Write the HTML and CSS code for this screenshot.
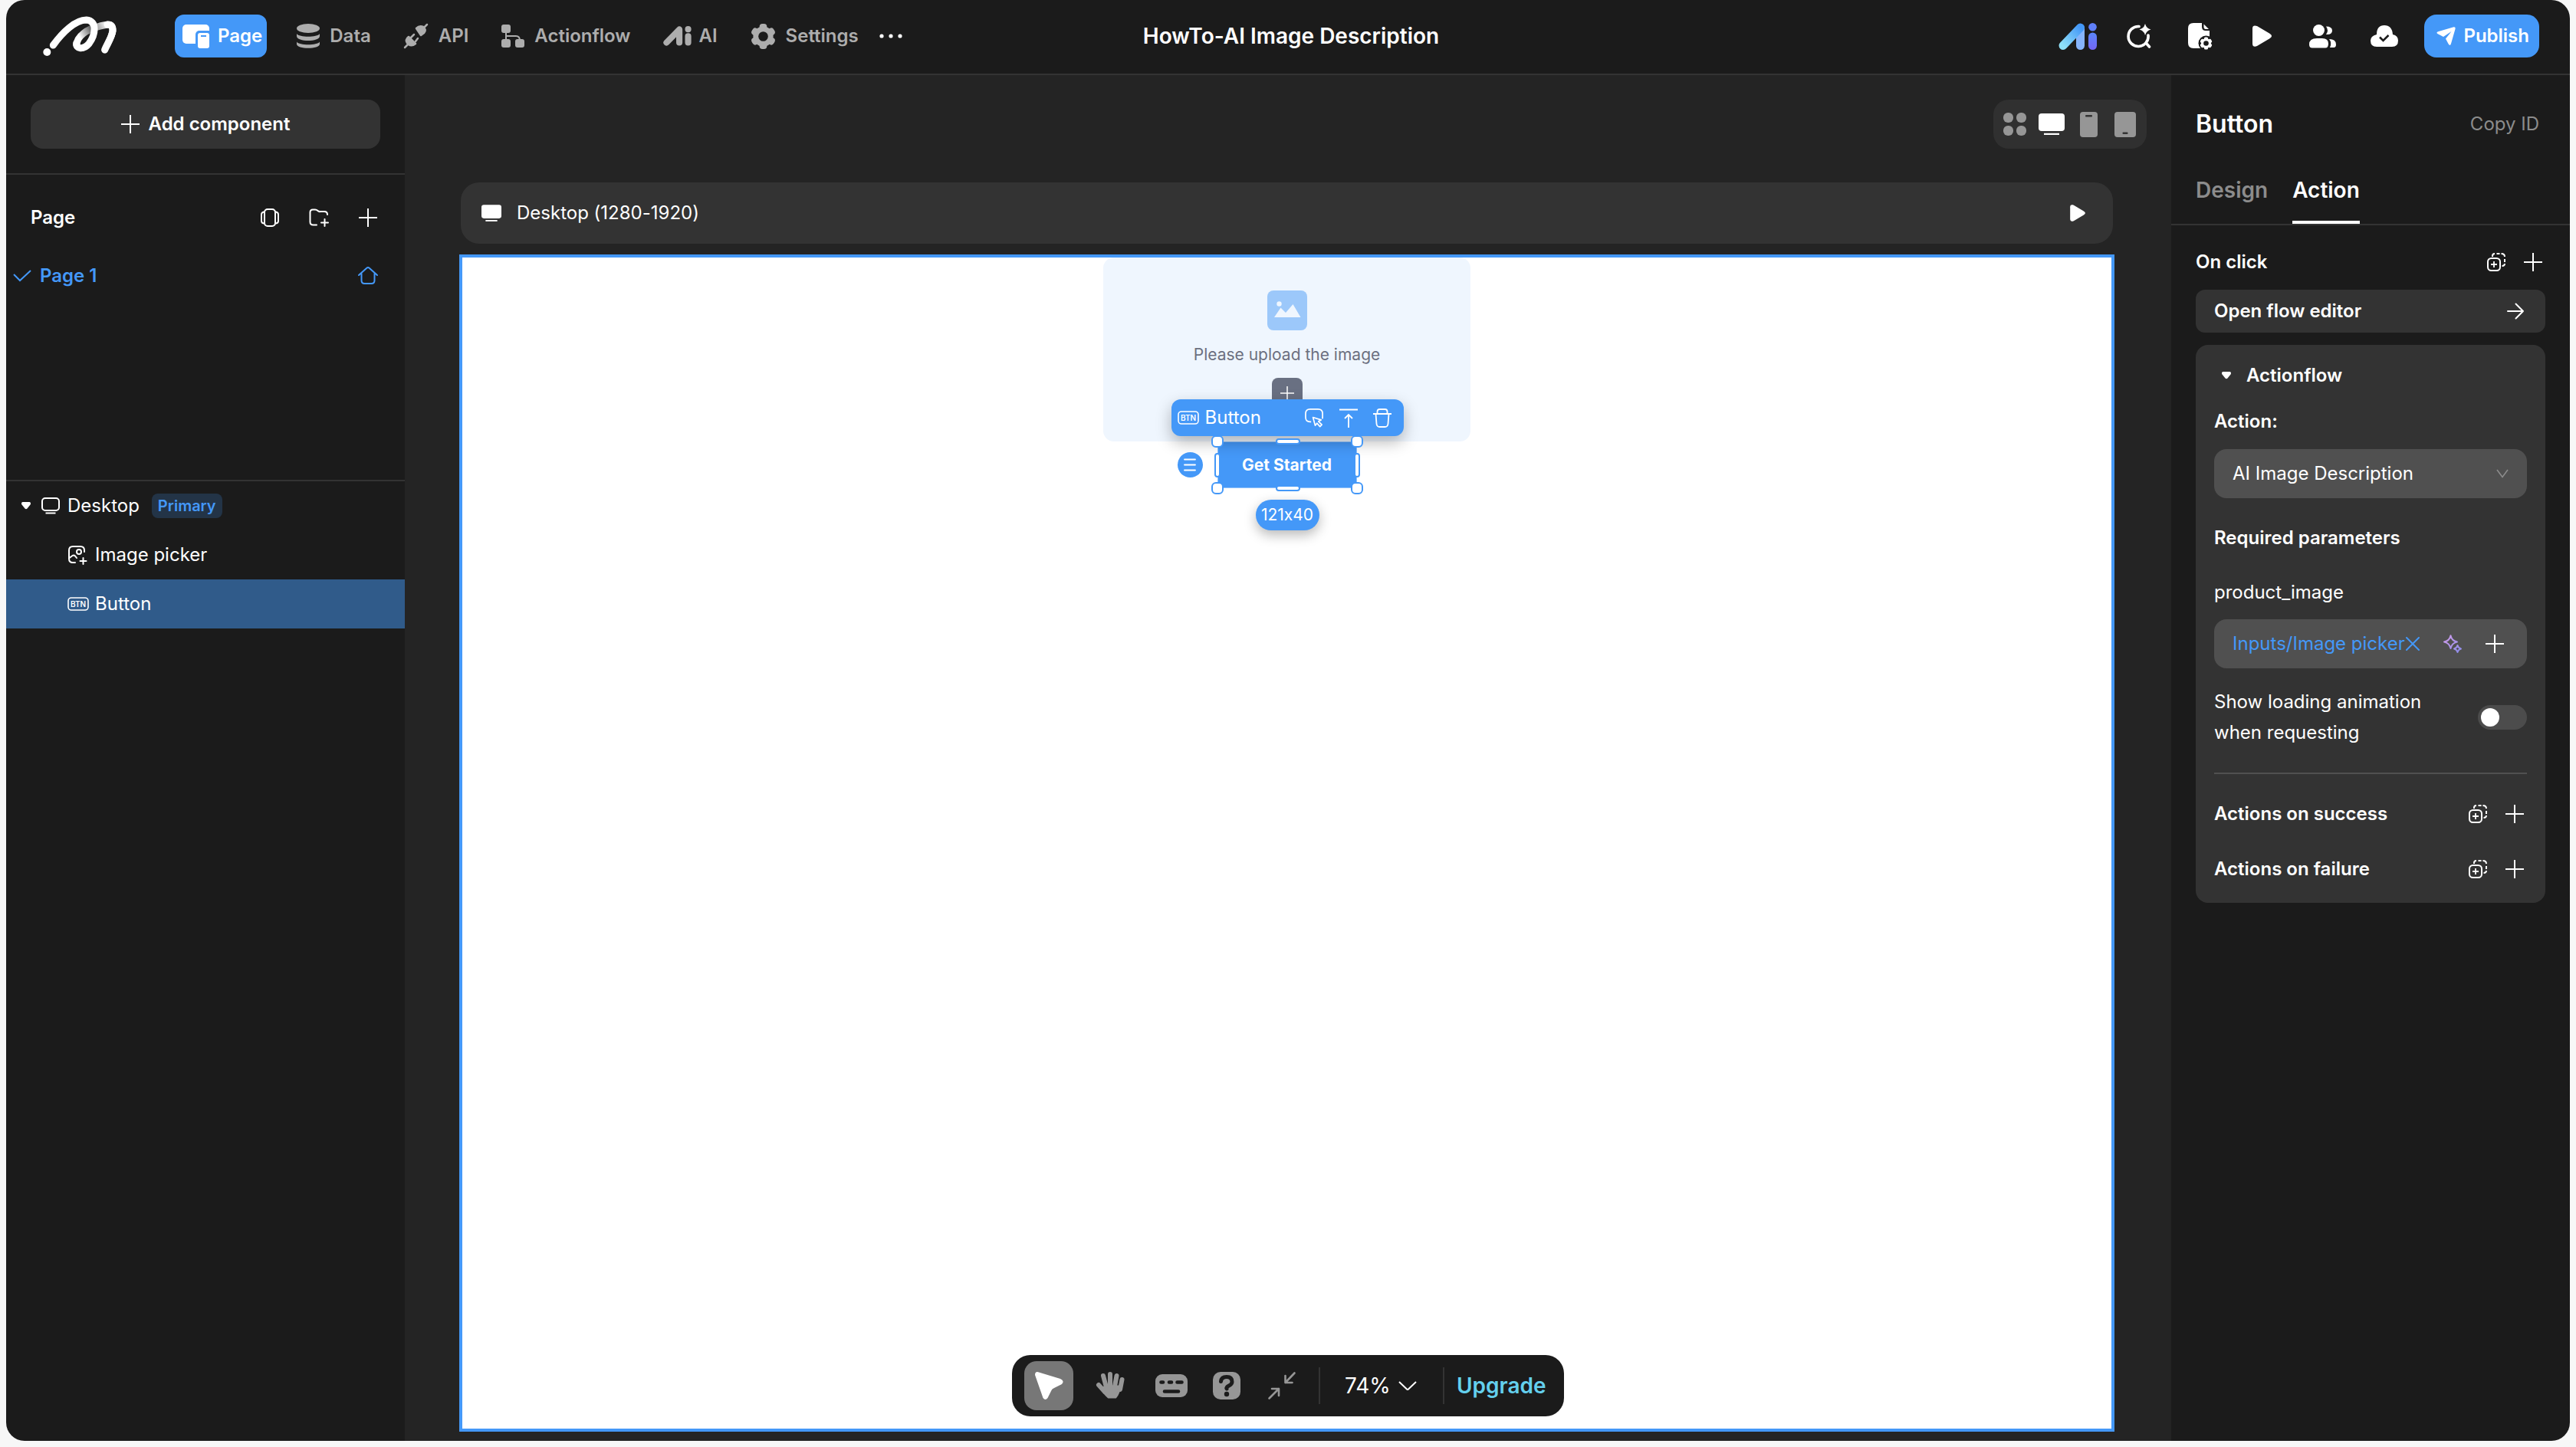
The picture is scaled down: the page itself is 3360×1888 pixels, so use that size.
FILE: index.html
```html
<!DOCTYPE html>
<html lang="en">
<head>
<meta charset="utf-8">
<title>HowTo-AI Image Description</title>
<link rel="stylesheet" href="styles.css">
</head>
<body>
<svg class="sprite" aria-hidden="true">
  <defs>
    <linearGradient id="logo-fold" gradientUnits="userSpaceOnUse" x1="185" y1="130" x2="302" y2="66">
      <stop offset="0.1" stop-color="#fff"/><stop offset="0.5" stop-color="#6a6a6a"/><stop offset="0.7" stop-color="#aaa"/><stop offset="1" stop-color="#fff"/>
    </linearGradient>
    <linearGradient id="ai-slant" x1="0" y1="1" x2="1" y2="0"><stop offset="0" stop-color="#8fe0f8"/><stop offset="1" stop-color="#4498f8"/></linearGradient>
    <linearGradient id="ai-i" x1="0" y1="0" x2="0" y2="1"><stop offset="0" stop-color="#5b86fa"/><stop offset="1" stop-color="#7465f3"/></linearGradient>
    <linearGradient id="sparkle" x1="0" y1="0" x2="1" y2="1"><stop offset="0" stop-color="#cf9be8"/><stop offset="1" stop-color="#8b8ce8"/></linearGradient>
  </defs>
  <symbol id="plus" viewBox="0 0 24 24"><path d="M12 0v24M0 12h24" stroke="currentColor" stroke-width="2"/></symbol>
  <symbol id="play" viewBox="0 0 25 28"><path d="M0 4C0 0 3 0 6 1L22 10.500C26 13 26 15 22 17.500L6 27C3 28.500 0 28 0 24Z" fill="currentColor"/></symbol>
  <symbol id="copy-plus" viewBox="0 0 24 24"><g fill="none" stroke="currentColor" stroke-width="2"><rect x="1" y="7" width="16" height="16" rx="4.500"/><path d="M9 11v8M5 15h8" stroke-width="1.800"/><path d="M7 5V4Q7 1 10 1M12.500 1h4M18.500 1Q23 1 23 5M23 8v4M23 14Q23 17 19.500 17"/></g></symbol>
  <symbol id="btn" viewBox="0 0 28 18"><rect x="1" y="1" width="26" height="16" rx="4" fill="none" stroke="currentColor" stroke-width="1.600"/><text x="14" y="12.700" class="btn-glyph" text-anchor="middle">BTN</text></symbol>
  <symbol id="caret" viewBox="0 0 12 10"><path d="M1.500 0h9Q13 1 11.500 3.500L7.500 8.500Q6 10 4.500 8.500L.5 3.500Q-1 1 1.500 0Z" fill="currentColor"/></symbol>
  <symbol id="chevron" viewBox="0 0 24 12"><path d="M1 1l11 10.500L23 1" fill="none" stroke="currentColor" stroke-width="2"/></symbol>
  <symbol id="screen" viewBox="0 0 34 28"><rect x="0" y="0" width="34" height="23" rx="4" fill="currentColor"/><path d="M7 27h20" stroke="currentColor" stroke-width="2.500"/></symbol>
</svg>

<div class="app">
  <header class="topbar">
    <nav class="topnav" aria-label="Workspace">
      <a class="logo" href="#" aria-label="Home">
        <svg width="96" height="53" viewBox="48 32 288 159" fill="none" stroke-linecap="round" stroke-linejoin="round">
          <circle cx="64" cy="173" r="15" fill="#fff"/>
          <path d="M180 145C180 110 225 82 262 74C302 62 322 60 321 90C318 115 300 140 290 164" stroke="url(#logo-fold)" stroke-width="27"/>
          <path d="M300 65C316 64 322 72 321 90C318 115 300 140 290 164" stroke="#fff" stroke-width="27"/>
          <path d="M88 146C125 95 175 47 218 47C262 50 254 105 228 140C206 166 176 160 179 138" stroke="#fff" stroke-width="27"/>
        </svg>
      </a>
      <a class="nav-item active" href="#">
        <svg width="36" height="31" viewBox="0 0 36 31"><rect width="35" height="25" rx="5" fill="#fff"/><rect x="17" y="8" width="22" height="26" rx="5" fill="#4498f8"/><rect x="20" y="11" width="15" height="20" rx="3" fill="#fff"/><rect x="24" y="14" width="7" height="2" fill="#4498f8"/></svg>
        Page</a>
      <a class="nav-item" href="#">
        <svg width="30" height="32" viewBox="0 0 30 32" fill="currentColor"><ellipse cx="15" cy="6" rx="15" ry="6"/><path d="M0 13c3 5 27 5 30 0v3c0 8-30 8-30 0zM0 23.500c3 5 27 5 30 0v3c0 7-30 7-30 0z"/></svg>
        Data</a>
      <a class="nav-item" href="#">
        <svg width="32" height="32" viewBox="0 0 32 32" fill="currentColor" stroke="currentColor" stroke-linecap="round" stroke-linejoin="round" stroke-width="2.500"><path d="M16 6Q20 2 25 4Q30 8 26 12L22 15Z"/><path d="M26 5l4-4M6 17L15 26Q10 30 6 27Q1 23 4 19Z"/><path d="M5 27l-4 4M9 18l4-4M15 23l3-4" /></svg>
        API</a>
      <a class="nav-item" href="#">
        <svg width="30" height="30" viewBox="0 0 30 30" fill="currentColor"><rect width="12" height="11" rx="3"/><rect y="19" width="12" height="11" rx="3"/><rect x="18" y="19" width="12" height="11" rx="3"/><path d="M6 10v10M6 15h13q5 0 5 6" fill="none" stroke="currentColor" stroke-width="2"/></svg>
        Actionflow</a>
      <a class="nav-item tight" href="#">
        <svg width="37" height="26" viewBox="0 0 50 35" stroke="currentColor" fill="currentColor" stroke-width="11" stroke-linecap="round" stroke-linejoin="round"><path d="M6 29L28.500 6V29" fill="none"/><path d="M44 18V29M44 5.500V5.600"/></svg>
        AI</a>
      <a class="nav-item" href="#">
        <svg width="33" height="33" viewBox="0 0 34 34" fill="currentColor"><rect x="12" y="0" width="10" height="34" rx="4"/><rect x="12" y="0" width="10" height="34" rx="4" transform="rotate(60 17 17)"/><rect x="12" y="0" width="10" height="34" rx="4" transform="rotate(120 17 17)"/><circle cx="17" cy="17" r="13.500"/><circle cx="17" cy="17" r="6.500" fill="#1b1b1b"/></svg>
        Settings</a>
      <button class="icon-btn more" aria-label="More"><svg width="30" height="6" viewBox="0 0 30 6" fill="#fff"><circle cx="3" cy="3" r="2.600"/><circle cx="15" cy="3" r="2.600"/><circle cx="27" cy="3" r="2.600"/></svg></button>
    </nav>
    <h1 class="title">HowTo-AI Image Description</h1>
    <div class="top-actions">
      <button class="icon-btn" aria-label="AI assistant"><svg width="50" height="35" viewBox="0 0 50 35" fill="none" stroke-linecap="round"><path d="M28.500 7V29.500" stroke="#86b4fb" stroke-width="11"/><path d="M6 29.500L28.500 6" stroke="url(#ai-slant)" stroke-width="11"/><circle cx="44.500" cy="5.300" r="5.300" fill="#6080f9"/><rect x="39" y="12.500" width="11" height="22.500" rx="5.500" fill="url(#ai-i)"/></svg></button>
      <button class="icon-btn" aria-label="Smart search"><svg width="31" height="32" viewBox="0 0 31 32" fill="none" stroke="#fff" stroke-width="3.600" stroke-linecap="round"><path d="M15 3.500A13 13 0 1 0 27 15M24 25l4.500 5"/><path d="M23 0q1.500 6 7.500 7.500q-6 1.500-7.500 7.500q-1.500-6-7.500-7.500q6-1.500 7.500-7.500z" fill="#fff" stroke="none"/></svg></button>
      <button class="icon-btn" aria-label="File settings"><svg width="32" height="35" viewBox="0 0 32 35" fill="#fff"><path d="M7 0h11v5q0 5 5 5h5v23H7q-7 0-7-7V7q0-7 7-7z"/><path d="M20.500 1.500l6.500 6.500h-4q-2.500 0-2.500-3z"/><circle cx="23.500" cy="26.500" r="10" fill="#1b1b1b"/><g><rect x="21" y="18.500" width="5" height="16" rx="1.500"/><rect x="21" y="18.500" width="5" height="16" rx="1.500" transform="rotate(60 23.500 26.500)"/><rect x="21" y="18.500" width="5" height="16" rx="1.500" transform="rotate(120 23.500 26.500)"/><circle cx="23.500" cy="26.500" r="6.500"/></g><circle cx="23.500" cy="26.500" r="3.300" fill="#1b1b1b"/></svg></button>
      <button class="icon-btn" aria-label="Preview"><svg width="25" height="28"><use href="#play"/></svg></button>
      <button class="icon-btn" aria-label="Members"><svg width="36" height="31" viewBox="0 0 36 31" fill="#fff"><circle cx="12.500" cy="7.500" r="7.500"/><path d="M10 18h7q8 0 8 7q0 5.500-4 5.500H4Q0 30.500 0 26q0-8 10-8zM22 2.500q8 0 8 5.500t-8 5q4-5 0-10.500zM26 19q9 0 9 7q0 4-3 4h-5q3-6-1-11z"/></svg></button>
      <button class="icon-btn" aria-label="Saved"><svg width="36" height="28" viewBox="0 0 36 28"><path d="M8 12Q8 0 18 0T29 12q7 1.500 7 8q0 8-8 8H8q-8 0-8-8q0-6 8-8z" fill="#fff"/><path d="M12 15.500l4.500 4.500 7-7" fill="none" stroke="#1b1b1b" stroke-width="2.500"/></svg></button>
      <button class="publish"><svg width="25" height="25" viewBox="0 0 25 25" fill="#fff"><path d="M22.500.3Q25 0 24.600 2.500L19 22q-1.200 3.600-3.300.5L12 15.500 19.500 6 9 13 1.800 9.300Q-1 7.500 2 6.300z"/></svg>Publish</button>
    </div>
  </header>

  <div class="workspace">
    <aside class="sidebar">
      <div class="add-wrap"><button class="add-btn"><svg width="24" height="24"><use href="#plus"/></svg>Add component</button></div>
      <section class="pages">
        <div class="pages-head">
          <h2>Page</h2>
          <button class="icon-btn" aria-label="Carousel"><svg width="24" height="24" viewBox="0 0 24 24" fill="none" stroke="currentColor" stroke-width="2"><rect x="5" y="1" width="14" height="22" rx="4"/><path d="M5 4.500Q1 4.500 1 8v8q0 3.500 4 3.500M19 4.500q4 0 4 3.500v8q0 3.500-4 3.500"/></svg></button>
          <button class="icon-btn" aria-label="New folder"><svg width="26" height="24" viewBox="0 0 26 24" fill="none" stroke="currentColor" stroke-width="2" stroke-linecap="round"><path d="M10 21.500H5.500Q1.500 21.500 1.500 17.500V5Q1.500 1.500 5 1.500H8Q10 1.500 11.500 3T15 4h5q4 0 4 4M20.500 14v9M16 18.500h9"/></svg></button>
          <button class="icon-btn" aria-label="Add page"><svg width="24" height="24"><use href="#plus"/></svg></button>
        </div>
        <a class="page-row" href="#">
          <svg width="24" height="16" viewBox="0 0 24 16" fill="none" stroke="currentColor" stroke-width="2"><path d="M1 6l8 8L23 1"/></svg>
          <span>Page 1</span>
          <svg width="26" height="24" viewBox="0 0 26 24" fill="none" stroke="currentColor" stroke-width="2" stroke-linecap="round" stroke-linejoin="round"><path d="M1 11L11 2q2-2 4 0l10 9M4.500 9v9q0 4 4 4h9q4 0 4-4V9"/></svg>
        </a>
      </section>
      <ul class="tree">
        <li class="tree-row"><svg class="tree-caret" width="12" height="10"><use href="#caret"/></svg>
          <svg width="24" height="22" viewBox="0 0 24 22" fill="none" stroke="currentColor" stroke-width="2"><rect x="1" y="1" width="22" height="16" rx="4"/><path d="M5.500 20.500h13"/></svg>
          <span>Desktop</span><span class="chip">Primary</span></li>
        <li class="tree-row child"><svg width="28" height="26" viewBox="0 0 28 26" fill="none" stroke="currentColor" stroke-width="2" stroke-linecap="round"><path d="M22 9V7q0-5-5-5H7Q2 2 2 7v11q0 5 5 5h3M2.500 17l4-3q2-1 3.500.5L12 17M20.500 17v8M16.500 21h8"/><circle cx="15" cy="9" r="3"/></svg><span>Image picker</span></li>
        <li class="tree-row child selected"><svg width="28" height="18"><use href="#btn"/></svg><span>Button</span></li>
      </ul>
    </aside>

    <main class="stage">
      <div class="devices" role="group" aria-label="Breakpoints">
        <button class="icon-btn" aria-label="All"><svg width="30" height="30" viewBox="0 0 30 30" fill="#969696"><rect width="13" height="13" rx="6"/><rect x="17" width="13" height="13" rx="6"/><rect y="17" width="13" height="13" rx="6"/><rect x="17" y="17" width="13" height="13" rx="6"/></svg></button>
        <button class="icon-btn" aria-label="Desktop"><svg width="34" height="28"><use href="#screen"/></svg></button>
        <button class="icon-btn" aria-label="Phone"><svg width="23" height="33" viewBox="0 0 23 33"><rect width="23" height="33" rx="4" fill="#969696"/><rect x="7" y="4" width="9" height="2.500" rx="1" fill="#333"/></svg></button>
        <button class="icon-btn" aria-label="Tablet"><svg width="28" height="33" viewBox="0 0 28 33"><rect width="28" height="33" rx="4" fill="#969696"/><rect x="10.500" y="26.500" width="7" height="2.500" rx="1" fill="#333"/></svg></button>
      </div>
      <div class="frame-bar">
        <svg width="26" height="22"><use href="#screen"/></svg>
        <span>Desktop (1280-1920)</span>
        <button class="icon-btn" aria-label="Preview frame"><svg width="20" height="22"><use href="#play"/></svg></button>
      </div>
      <div class="frame">
        <div class="picker">
          <svg width="52" height="52" viewBox="0 0 52 52"><rect width="52" height="52" rx="8" fill="#9cc8fa"/><circle cx="15.500" cy="17.500" r="3.200" fill="#eff6fe"/><path d="M9 35l8.500-12.500 6.500 6.500L33.500 18 43.500 35z" fill="#eff6fe"/></svg>
          <span>Please upload the image</span>
          <button class="picker-add" aria-label="Upload"><svg width="18" height="18"><use href="#plus"/></svg></button>
        </div>
        <div class="selection">
          <button class="cta">Get Started</button>
          <i class="corner tl"></i><i class="corner tr"></i><i class="corner bl"></i><i class="corner br"></i>
          <i class="edge top"></i><i class="edge bottom"></i><i class="edge left"></i><i class="edge right"></i>
          <div class="sel-bar">
            <svg width="28" height="18"><use href="#btn"/></svg><span>Button</span>
            <button class="icon-btn" aria-label="Interaction"><svg width="25" height="25" viewBox="0 0 26 26" fill="none" stroke="#fff" stroke-width="1.800" stroke-linejoin="round"><path d="M8.500 18H7q-6 0-6-6V7q0-6 6-6h11q6 0 6 6v5q0 1-.5 2"/><path d="M11 12l11 3.500-3.500 2L23 22l-2.500 2.500-4-4.500-2.500 3z"/></svg></button>
            <button class="icon-btn" aria-label="Select parent"><svg width="24" height="25" viewBox="0 0 24 25" fill="none" stroke="#fff" stroke-width="1.800"><path d="M0 1.500h24M12 25V8M7 13l5-5 5 5"/></svg></button>
            <button class="icon-btn" aria-label="Delete"><svg width="24" height="25" viewBox="0 0 24 25" fill="none" stroke="#fff" stroke-width="1.800"><path d="M0 7h24M3.500 7l1 13q.5 4 4 4h7q3.500 0 4-4l1-13M5.500 6V4q0-3 3-3h7q3 0 3 3v2"/></svg></button>
          </div>
          <button class="sel-menu" aria-label="Menu"><svg width="16" height="17" viewBox="0 0 16 17" stroke="#fff" stroke-width="1.800" stroke-linecap="round"><path d="M1 1.500h14M1 8.500h14M1 15.500h14"/></svg></button>
          <div class="sel-size">121x40</div>
        </div>
      </div>
      <div class="dock">
        <button class="tool current" aria-label="Select"><svg width="37" height="37" viewBox="0 0 37 37"><path d="M0 4Q0-1 5 .4L33 9q6 3 2 7L25 21q-3 1-4 4l-4.500 9q-3 4-6 0z" fill="#fff"/></svg></button>
        <button class="tool" aria-label="Pan"><svg width="37" height="36" viewBox="0 0 37 36" fill="none" stroke="#969696" stroke-width="6" stroke-linecap="round" stroke-linejoin="round"><path d="M9 5l4 15M18 3v16M26.500 5L24 19M33.500 10L31 23M3 17l8 9"/><path d="M12 19h18q0 8-5 14h-9Q8 26 8 22z" fill="#969696" stroke-width="3"/></svg></button>
        <button class="tool slim" aria-label="Shortcuts"><svg width="42" height="30" viewBox="0 0 42 30"><rect width="42" height="30" rx="9" fill="#969696"/><path d="M7.500 10.500h2.500M18 10.500h3M28.500 10.500h6M12 22.500h18" stroke="#1b1b1b" stroke-width="4.600" stroke-linecap="round"/></svg></button>
        <button class="tool slim" aria-label="Help"><svg width="36" height="36" viewBox="0 0 36 36"><rect width="36" height="36" rx="10" fill="#969696"/><path d="M10.500 12.500Q11 6.500 18 6.500T25 13Q25 16 21 18T18 22" fill="none" stroke="#1b1b1b" stroke-width="5" stroke-linecap="round"/><circle cx="18" cy="29" r="3.200" fill="#1b1b1b"/></svg></button>
        <button class="tool slim" aria-label="Collapse"><svg width="36" height="36" viewBox="0 0 36 36" fill="none" stroke="#969696" stroke-width="2.600" stroke-linecap="round" stroke-linejoin="round"><path d="M34.500 1.500L22.500 14M22.500 5v9h9M1.500 34.500L14 22M5 22h9v9"/></svg></button>
        <label class="zoom"><select aria-label="Zoom"><option>74%</option></select><svg width="24" height="12"><use href="#chevron"/></svg></label>
        <a class="upgrade" href="#">Upgrade</a>
      </div>
    </main>

    <aside class="inspector">
      <div class="insp-head"><h2>Button</h2><button class="copy-id">Copy ID</button></div>
      <div class="tabs" role="tablist"><button role="tab" class="tab">Design</button><button role="tab" class="tab on" aria-selected="true">Action</button></div>
      <div class="insp-body">
        <div class="line event"><h3>On click</h3><button class="icon-btn" aria-label="Paste action"><svg width="24" height="24"><use href="#copy-plus"/></svg></button><button class="icon-btn" aria-label="Add action"><svg width="24" height="24"><use href="#plus"/></svg></button></div>
        <button class="flow-btn">Open flow editor<svg width="22" height="22" viewBox="0 0 22 22" fill="none" stroke="currentColor" stroke-width="2" stroke-linecap="round" stroke-linejoin="round"><path d="M1 11h20M11.500 1.500L21 11l-9.500 9.500"/></svg></button>
        <section class="card">
          <h3 class="card-title"><svg width="12" height="10"><use href="#caret"/></svg>Actionflow</h3>
          <label class="strong-label" for="action">Action:</label>
          <div class="select"><select id="action"><option>AI Image Description</option></select><svg width="16" height="12" viewBox="0 0 16 12"><path d="M1 1l7 9.500L15 1" fill="none" stroke="#8c8c8c" stroke-width="1.600"/></svg></div>
          <h3 class="params">Required parameters</h3>
          <div class="param-name">product_image</div>
          <div class="field">
            <span>Inputs/Image picker</span>
            <button class="icon-btn clear" aria-label="Remove"><svg width="18" height="18" viewBox="0 0 18 18" stroke="#4498f8" stroke-width="2" stroke-linecap="round"><path d="M1 1l16 16M17 1L1 17"/></svg></button>
            <button class="icon-btn" aria-label="Generate"><svg width="24" height="24" viewBox="0 0 24 24" fill="none" stroke="url(#sparkle)" stroke-width="2" stroke-linejoin="round"><path d="M9.500 1.200q1.500 7 8.500 8.300q-7 1.500-8.500 8.500q-1.500-7-8.500-8.500q7-1.300 8.500-8.300zM18.500 14q.8 3.500 4.500 4.500q-3.700 1-4.500 4.500q-.8-3.500-4.500-4.500q3.700-1 4.500-4.500z"/></svg></button>
            <button class="icon-btn" aria-label="Add value"><svg width="24" height="24"><use href="#plus"/></svg></button>
          </div>
          <div class="switch-row"><label for="loading">Show loading animation when requesting</label><input id="loading" class="switch" type="checkbox"></div>
          <div class="line first"><h3>Actions on success</h3><button class="icon-btn" aria-label="Paste action"><svg width="24" height="24"><use href="#copy-plus"/></svg></button><button class="icon-btn" aria-label="Add action"><svg width="24" height="24"><use href="#plus"/></svg></button></div>
          <div class="line"><h3>Actions on failure</h3><button class="icon-btn" aria-label="Paste action"><svg width="24" height="24"><use href="#copy-plus"/></svg></button><button class="icon-btn" aria-label="Add action"><svg width="24" height="24"><use href="#plus"/></svg></button></div>
        </section>
      </div>
    </aside>
  </div>
</div>
</body>
</html>
```

FILE: styles.css
```css
* { box-sizing: border-box; }
body {
  margin: 0;
  background: #f7f7f7;
  color: #fff;
  font: 24px/32px Inter, "Liberation Sans", sans-serif;
  font-variant-ligatures: no-contextual;
}
h1, h2, h3 { margin: 0; font-size: inherit; font-weight: 600; }
ul { margin: 0; padding: 0; list-style: none; }
a { color: inherit; text-decoration: none; }
button, select { margin: 0; padding: 0; border: 0; background: none; color: inherit; font: inherit; appearance: none; }
svg { display: block; flex: none; overflow: visible; }
.sprite { position: absolute; width: 0; height: 0; }
.icon-btn { display: flex; align-items: center; justify-content: center; }
.btn-glyph { fill: currentColor; font-size: 10px; font-weight: 600; }

.app {
  display: flex;
  flex-direction: column;
  height: calc(100vh - 8px);
  margin: 0 8px 8px;
  border-radius: 24px;
  overflow: hidden;
  background: #1b1b1b;
}

/* Top bar */
.topbar {
  display: grid;
  grid-template-columns: 1fr auto 1fr;
  align-items: center;
  height: 98px;
  padding: 0 40px 2px 48px;
  border-bottom: 2px solid #333;
}
.topnav, .top-actions { display: flex; align-items: center; }
.logo { margin-right: 76px; }
.nav-item {
  display: flex;
  align-items: center;
  gap: 13px;
  height: 56px;
  margin-right: 43px;
  color: #adadad;
  font-weight: 600;
}
.nav-item.tight { gap: 9px; }
.nav-item.active {
  gap: 10px;
  margin-right: 39px;
  padding: 0 6px 0 10px;
  border-radius: 12px;
  background: #4498f8;
  color: #fff;
}
.more { margin-left: -16px; }
.title { font-size: 28px; }
.top-actions { justify-content: flex-end; gap: 24px; }
.top-actions .icon-btn { width: 56px; height: 56px; }
.publish {
  display: flex;
  align-items: center;
  gap: 10px;
  height: 56px;
  padding: 0 13px 0 16px;
  border-radius: 16px;
  background: #4498f8;
  font-weight: 600;
}

.workspace { display: grid; grid-template-columns: 520px 1fr 520px; flex: 1; min-height: 0; }

/* Left sidebar */
.add-wrap { padding: 32px; border-bottom: 2px solid #333; }
.add-btn {
  display: flex;
  align-items: center;
  justify-content: center;
  gap: 12px;
  width: 100%;
  height: 64px;
  border-radius: 16px;
  background: #333;
  font-weight: 600;
}
.pages { height: 400px; padding: 24px 0; border-bottom: 2px solid #333; }
.pages-head { display: flex; align-items: center; gap: 39px; height: 64px; padding: 0 36px 0 32px; }
.pages-head h2 { flex: 1; }
.page-row { display: flex; align-items: center; gap: 11px; height: 64px; margin-top: 12px; padding: 0 35px 0 9px; color: #4498f8; font-weight: 600; }
.page-row span { flex: 1; }
.tree-row { display: flex; align-items: center; gap: 10px; height: 64px; padding-left: 20px; }
.tree-row.child { gap: 8px; padding-left: 80px; }
.tree-row.selected { background: #305b8a; }
.tree-caret { margin-right: 4px; }
.chip { margin-left: 6px; padding: 0 8px; border-radius: 8px; background: #233447; color: #4498f8; font-size: 20px; font-weight: 600; }

/* Canvas */
.stage {
  position: relative;
  display: flex;
  flex-direction: column;
  padding: 32px 76px 12px 73px;
  background: #242424;
}
.devices { display: flex; align-self: flex-end; width: 200px; height: 64px; margin-right: -44px; padding: 0 4px; border-radius: 20px; background: #303030; }
.devices .icon-btn { flex: 1; }
.frame-bar { display: flex; align-items: center; gap: 20px; height: 80px; margin-top: 44px; padding: 0 36px 0 27px; border-radius: 24px; background: #333; }
.frame-bar span { flex: 1; }
.frame { flex: 1; margin: 14px -2px 0; border: 4px solid #4498f8; background: #fff; }
.picker {
  display: flex;
  flex-direction: column;
  align-items: center;
  width: 479px;
  height: 240px;
  margin: 0 auto;
  padding-top: 43px;
  border-radius: 14px;
  background: #eff6fe;
  color: #6c7080;
  font-size: 21px;
}
.picker span { margin-top: 16px; }
.picker-add { display: flex; align-items: center; justify-content: center; width: 40px; height: 40px; margin-top: 14px; border-radius: 8px; background: #697082; color: #fff; }

/* Selected element and its handles */
.selection { position: relative; width: 182px; margin: 0 auto; }
.cta { display: block; width: 100%; height: 61px; border: 1px solid #8fc1fb; border-radius: 4px; background: #4498f8; font-size: 21px; font-weight: 700; }
.corner, .edge { position: absolute; z-index: 1; border: 2px solid #4498f8; background: #fff; }
.corner { width: 16px; height: 16px; border-radius: 6px; }
.tl, .tr { top: -8px; }
.bl, .br { bottom: -8px; }
.tl, .bl { left: -8px; }
.tr, .br { right: -8px; }
.top, .bottom { left: 76px; width: 32px; height: 8px; border-radius: 4px; }
.top { top: -4px; }
.bottom { bottom: -4px; }
.left, .right { top: 15px; width: 8px; height: 32px; border-radius: 4px; }
.left { left: -4px; }
.right { right: -4px; }
.sel-bar {
  position: absolute;
  top: -55px;
  left: -60px;
  display: flex;
  align-items: center;
  width: 303px;
  height: 48px;
  padding: 0 16px 0 8px;
  border-radius: 12px;
  background: #4498f8;
  box-shadow: 0 8px 20px rgba(0, 0, 0, .28);
}
.sel-bar span { flex: 1; margin-left: 8px; }
.sel-bar .icon-btn { margin-left: 20px; }
.sel-menu { position: absolute; top: 14px; left: -52px; display: flex; align-items: center; justify-content: center; width: 33px; height: 33px; border-radius: 50%; background: #4498f8; }
.sel-size { position: absolute; top: 76px; left: 50px; width: 83px; border-radius: 20px; background: #4498f8; font-size: 21px; line-height: 40px; text-align: center; box-shadow: 0 6px 16px rgba(0, 0, 0, .28); }

/* Floating tool dock */
.dock {
  position: absolute;
  bottom: 32px;
  left: 50%;
  display: flex;
  align-items: center;
  width: 720px;
  height: 80px;
  padding: 0 16px;
  border-radius: 24px;
  background: #1b1b1b;
  transform: translateX(-50%);
}
.tool { display: flex; align-items: center; justify-content: center; width: 64px; height: 64px; margin-right: 16px; border-radius: 16px; }
.tool.slim { width: 48px; margin: 0 16px 0 8px; }
.tool.current { background: #777; }
.zoom { display: grid; grid-template-columns: 70px 24px; align-items: center; width: 164px; height: 48px; margin-left: 8px; padding-left: 32px; border: solid #333; border-width: 0 2px; font-size: 28px; }
.zoom select { grid-area: 1 / 1 / 2 / 3; }
.zoom svg { grid-area: 1 / 2; pointer-events: none; }
.upgrade { margin-left: 16px; color: #64d0ee; font-size: 28px; font-weight: 600; }

/* Right inspector */
.insp-head { display: flex; align-items: center; justify-content: space-between; height: 128px; padding: 0 40px 0 32px; }
.insp-head h2 { font-size: 32px; }
.copy-id { color: #8c8c8c; }
.tabs { display: flex; gap: 32px; height: 68px; padding-left: 32px; border-bottom: 2px solid #333; font-size: 28px; font-weight: 600; }
.tab { padding-bottom: 18px; border-bottom: 4px solid transparent; color: #8c8c8c; font-weight: 600; }
.tab.on { border-color: #fff; color: #fff; }
.insp-body { padding: 12px 32px; }
.line { display: flex; align-items: center; gap: 24px; height: 72px; padding-right: 4px; }
.line h3 { flex: 1; }
.flow-btn { display: flex; align-items: center; justify-content: space-between; width: 100%; height: 56px; padding: 0 28px 0 24px; border-radius: 12px; background: #333; font-weight: 600; }
.card { margin-top: 16px; padding: 24px 24px 8px; border-radius: 16px; background: #333; }
.card-title { display: flex; align-items: center; gap: 20px; padding-left: 10px; }
.strong-label { display: block; margin-top: 28px; font-weight: 600; }
.select { display: grid; grid-template-columns: 1fr 16px; align-items: center; height: 64px; margin-top: 20px; padding: 0 24px; border-radius: 16px; background: #505050; }
.select select { grid-area: 1 / 1 / 2 / 3; }
.select svg { grid-area: 1 / 2; pointer-events: none; }
.params { margin-top: 36px; }
.param-name { margin-top: 39px; }
.field { display: flex; align-items: center; height: 64px; margin-top: 19px; padding: 0 30px 0 24px; border-radius: 16px; background: #505050; }
.field span { color: #4498f8; white-space: nowrap; }
.field .icon-btn + .icon-btn { margin-left: 31px; }
.field .clear { margin-left: auto; }
.switch-row { display: flex; align-items: center; justify-content: space-between; margin-top: 24px; padding-bottom: 32px; border-bottom: 2px solid #505050; line-height: 40px; }
.switch-row label { width: 280px; }
.switch { width: 64px; height: 32px; margin: 0; padding: 4px; border-radius: 16px; background: #4c4c4c; appearance: none; }
.switch::before { content: ""; display: block; width: 24px; height: 24px; border-radius: 50%; background: #fff; }
.switch:checked::before { margin-left: auto; }
.line.first { margin-top: 16px; }
```
